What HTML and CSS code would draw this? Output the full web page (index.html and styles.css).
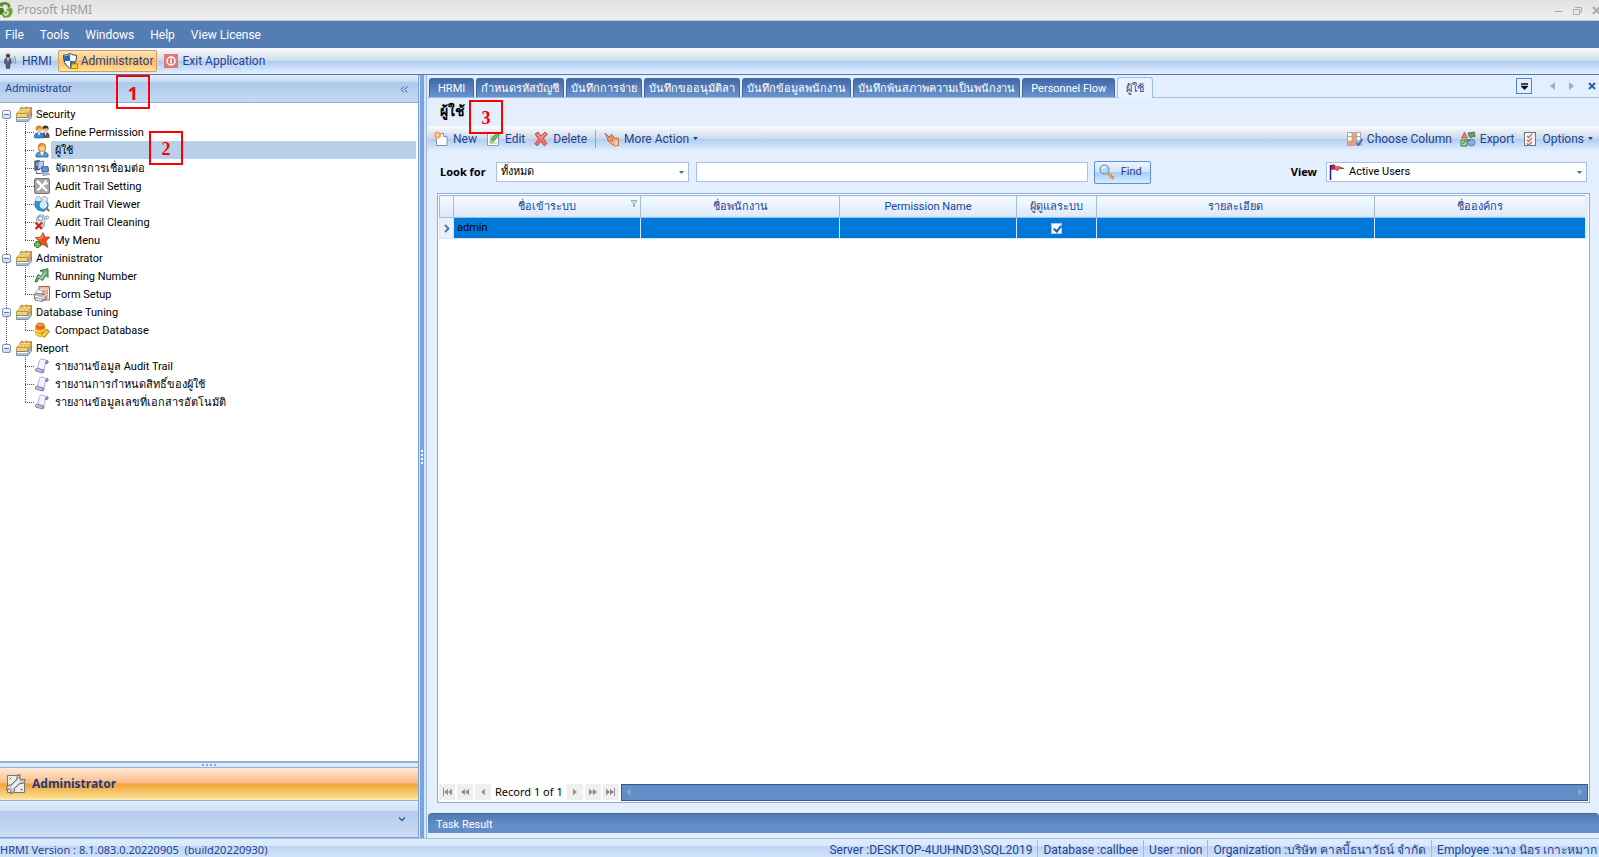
FILE: index.html
```html
<!DOCTYPE html>
<html lang="th">
<head>
<meta charset="utf-8">
<title>Prosoft HRMI</title>
<link rel="stylesheet" href="styles.css">
</head>
<body>
<svg class="defs" aria-hidden="true">
  <defs>
    <symbol id="i-folder" viewBox="0 0 16 16">
      <path d="M0.5 8.5 4 4.500V2.500L6 1 8 2.500 10 .8 12 2 15.500 1.500V9L12 13.500H1.500Z" fill="#e4b04a" stroke="#a97716" stroke-width=".8"/>
      <path d="M1 7 5 2.500H15.300L11.500 7Z" fill="#fff0b5" stroke="#b78524" stroke-width=".6"/>
      <path d="M7 3 4 7M11 3 8 7M4 4.800H13" stroke="#c99b42" stroke-width=".7"/>
      <path d="M.5 7.500H11.500V11.500H.5Z" fill="#f7d36d" stroke="#b98828" stroke-width=".7"/>
      <path d="M.5 11.500H11.500L15.500 7V11L12 15.500H.5Z" fill="#aebfd0" stroke="#687c91" stroke-width=".8"/><path d="M1 12.500H11.500" stroke="#fff"/>
    </symbol>
    <symbol id="i-users" viewBox="0 0 16 16">
      <circle cx="11.500" cy="5" r="2.700" fill="#e9b885"/><path d="M8.500 5Q8 1.500 11.500 1.500T14.500 6L13 4Z" fill="#333"/><path d="M8 14V10Q8.500 8 11.500 8T15.500 11V14Z" fill="#565b62"/><path d="m10.500 8 1 4 1-4Z" fill="#fff"/>
      <circle cx="5" cy="5" r="3" fill="#f5bc73"/><path d="M1.500 6Q1 1.500 5 1.500T8.500 6Q7 5.500 6 4 4 5.500 1.500 6Z" fill="#d88a20"/><path d="M.5 14V11Q1 8.500 5 8.500T9.500 11V14Z" fill="#3787d8" stroke="#174d8c" stroke-width=".5"/><path d="m3.500 8.500 1.500 3 1.500-3Z" fill="#fff"/>
    </symbol>
    <symbol id="i-user" viewBox="0 0 16 16">
      <path d="M2 15V12.500Q3 9.500 8 9.500T14 12.500V15Z" fill="#4c9de1" stroke="#1c5ba4" stroke-width=".8"/>
      <path d="M4 3Q8-1.500 12 3V8L10 10.500H6L4 8Z" fill="#dd8c28"/><circle cx="8" cy="6" r="2.900" fill="#f9d09a"/><path d="M4.800 5.500Q6 1 11.200 5.500 8.500 5 7.500 3.500 7 5 4.800 5.500Z" fill="#d17d1d"/><path d="m6 9.800 2 4.200 2-4.200Z" fill="#fff"/>
    </symbol>
    <symbol id="i-connect" viewBox="0 0 16 16">
      <path d="M.8 1 5.500 .5V9.500L.8 10.500Z" fill="#57678c" stroke="#293654" stroke-width=".7"/><path d="M2 3H5M2 5H5" stroke="#c5d2ea"/>
      <path d="M4 2 9.500 1V8L4 9Z" fill="#b9cdf0" stroke="#5d7196" stroke-width=".8"/>
      <path d="m7.500 7 6.500-.5.500 5-6.500.7Z" fill="#5b97e8" stroke="#46566f" stroke-width=".9"/><path d="M2.500 11.500V13.500H7.500" stroke="#555e6b" fill="none"/><path d="m8.500 13.500 6-.5 1 1.500-6.500 1Z" fill="#d9dee6" stroke="#697686" stroke-width=".7"/>
    </symbol>
    <symbol id="i-tools" viewBox="0 0 16 16">
      <rect x=".5" y=".5" width="15" height="15" rx="1.500" fill="#a8a8a8" stroke="#747474"/><path d="M3.500 12.500 11 5M4.500 4.500 13 13" stroke="#fff" stroke-width="2.200"/><path d="m2 3.500 2-1.500 3 3-2 2Z" fill="#fff"/><path d="M9.500 4.500 11.500 2 13 2.500 11.800 4 13 5l1-1Q14.500 7 11 6.800Z" fill="#fff"/>
    </symbol>
    <symbol id="i-viewer" viewBox="0 0 16 16">
      <circle cx="4.500" cy="3.500" r="3" fill="#e1e6eb" stroke="#8492a2" stroke-dasharray="1.500 .8"/><circle cx="10.500" cy="3.500" r="3" fill="#e1e6eb" stroke="#8492a2" stroke-dasharray="1.500 .8"/><path d="M1 5.500 14 6.500V11L10 15.500 4 14 1 10.500Z" fill="#299ad9" stroke="#1769a5" stroke-width=".7"/><circle cx="9.500" cy="9" r="3.300" fill="#c6edff" stroke="#e8f8ff"/><path d="m12 11.500 3.200 3.700" stroke="#8b7043" stroke-width="2"/>
    </symbol>
    <symbol id="i-clean" viewBox="0 0 16 16">
      <path d="M3 3 5 .8 9.500 1 11 5 10 13 4 13 2.500 8Z" fill="#dbe8f2" stroke="#8095aa" stroke-width=".8"/><circle cx="6.500" cy="4.500" r="2.300" fill="#fff" stroke="#73889e"/><path d="M12 5V2Q14.500 1.500 14.500 3.500T12 5" fill="none" stroke="#8095aa"/><path d="M9 8V12.500" stroke="#9aaec0"/><path d="M1.500 8.500 8 15M8 8.500 1.500 15" stroke="#d8200d" stroke-width="2.300"/>
    </symbol>
    <symbol id="i-star" viewBox="0 0 16 16">
      <path d="m9 .5 2 4.500 5 0-4 4.200 2 6.300-5-3-5 2 1.500-5L1 5.500 6.500 5Z" fill="#ee4b25" stroke="#ad2c10" stroke-width=".6"/><path d="m8.500 2.500-.5 3.500-4 .5" fill="none" stroke="#ffa47a"/><path d="M0 12.500H7M3.500 9V16" stroke="#2d7525" stroke-width="3.500"/><path d="M.8 12.500H6.200M3.500 9.800V15.500" stroke="#7dcc58" stroke-width="1.800"/>
    </symbol>
    <symbol id="i-running" viewBox="0 0 16 16">
      <path d="M1 13.500 4 6.500l3 2L9.500 4.800 6 2.500 14 .8V9.500L12 7.300 8.500 12.500 5 10 3 14Z" fill="#6fb675" stroke="#2d6841" stroke-width=".9"/><path d="m4.500 8.500 2.800 2 4-6" stroke="#d6f0d7" fill="none"/>
    </symbol>
    <symbol id="i-form" viewBox="0 0 16 16">
      <path d="M5 .5H15.500V14H5Z" fill="#fff4e8" stroke="#a55d42"/><path d="M5 2H15M7 5H14M7 7H14M10 3V13M13 3V13" stroke="#dc8c69"/><path d="M1 7 4 3.500 9 5 7 9Z" fill="#fff" stroke="#888" stroke-width=".7"/><path d="m0 9 3-2 9 2v4l-4 2.500L1 14Z" fill="#b4b8bd" stroke="#666" stroke-width=".8"/><path d="m1 10 7 2 4-3M2 13l5 1.500" fill="none" stroke="#fff"/>
    </symbol>
    <symbol id="i-database" viewBox="0 0 16 16">
      <path d="M1 3.500H11.500V13Q9 16 4 14.500L1 12Z" fill="#f4a712"/><path d="M2.500 3V6.500Q6 8.500 10 6.500V3Z" fill="#e0661a"/><ellipse cx="6.300" cy="3" rx="3.900" ry="2" fill="#f39446" stroke="#c55a0b" stroke-width=".7"/><path d="M1 8Q6 11.500 12 7.500M1 11Q6 14 9 12.500" fill="none" stroke="#ffe27a" stroke-width="1.400"/><path d="m7 12.500 6-5.500 2.500 2.500-5 6Z" fill="#e2bd28" stroke="#9a7811" stroke-width=".8"/><path d="m8.500 14 4-4" stroke="#fff6a6"/>
    </symbol>
    <symbol id="i-scroll" viewBox="0 0 16 16">
      <path d="M5.500 2.500Q6 .5 8 1L13.500 2.500Q15.500 4 13 5.500L11.500 5 9.800 12.500 3.500 10.500Z" fill="#f2f3fc" stroke="#9da1bd" stroke-width=".8"/><path d="M3 10 10 12.200Q10.500 14.500 8.500 15L1.500 13Q.5 11 3 10Z" fill="#b9bddc" stroke="#70769b" stroke-width=".8"/><path d="M13.500 2.500Q11 3 11.500 5.500 14 6.500 14 3.500ZM10 12Q7.500 13 8.500 15" fill="#8d92b3" stroke="#777e9f" stroke-width=".8"/>
    </symbol>
    <symbol id="i-logo" viewBox="0 0 14 16">
      <path d="M0 1Q8-2 11 4.500L7.500 6.500Q9 2.500 4 2.500L2 5-1 3.500Z" fill="#5a8f2e"/><path d="M11 5.500Q15 9 10 15L4 16 1 12H4L5 14Q9 13 9 10L6 7.500Z" fill="#6da73a"/><path d="M0 6Q3 5 4 8T0 13Z" fill="#477b26"/><path d="m4 9 4 1-1.500 2.500L4.500 12Z" fill="#8dbb53"/>
    </symbol>
    <symbol id="i-person" viewBox="0 0 16 16">
      <circle cx="5" cy="2.700" r="2.200" fill="#584941"/><path d="M1.500 6Q4 4 8 5.500L9 10 7.500 11 7 16H3L2.500 11 .8 10Z" fill="#4d5c78"/><path d="m4 5 1 5 1-5Z" fill="#e7edf6"/><path d="m5 6-.5 3 .5 1 .5-1Z" fill="#c13f39"/><path d="M9.500 4.500Q11 7 10 10M11.500 3Q13.500 7 12 11" fill="none" stroke="#8d96a4"/>
    </symbol>
    <symbol id="i-shield" viewBox="0 0 16 16">
      <path d="M8 .5Q11 2.500 14.500 2.200 15 11 8 15.500 1 11 1.500 2.200 5 2.500 8 .5Z" fill="#fff" stroke="#30435f"/><path d="M8 1.500V8H2Q1.800 5 2.300 3Q5.500 3 8 1.500ZM8 8H14Q12.500 12 8 14.500Z" fill="#2d67bd"/><rect x="9.500" y="11" width="6" height="4.500" fill="#ffd02a" stroke="#a87a00" stroke-width=".8"/><path d="M10.800 11V9.500Q12.500 7.500 14.200 9.500V11" fill="none" stroke="#bd9107"/>
    </symbol>
    <symbol id="i-power" viewBox="0 0 16 16"><rect x="1" y="1" width="14" height="14" fill="#df7774"/><circle cx="8" cy="8" r="4" fill="none" stroke="#fff" stroke-width="1.500"/><path d="M8 5.500V10.500" stroke="#fff" stroke-width="1.600"/></symbol>
    <symbol id="i-new" viewBox="0 0 14 16"><path d="M2.500 2.500H9.500L13 5.500V14.500H2.500Z" fill="#fff" stroke="#8795ad"/><path d="M9.500 2.500V5.500H13" fill="#dfe8f4" stroke="#8795ad"/><circle cx="3.500" cy="4" r="3.500" fill="#f6a177"/><circle cx="3.500" cy="4" r="1.500" fill="#ffe489"/></symbol>
    <symbol id="i-edit" viewBox="0 0 14 16"><path d="M1.500 2.500H12.500V14.500H1.500Z" fill="#fff" stroke="#8b9cb7"/><path d="M3.500 5H8M3.500 7H7M3.500 12H11" stroke="#a3b5cf"/><path d="m4 12 1-4 6-6.500L13.500 4 7 11Z" fill="#75b956" stroke="#438435" stroke-width=".7"/><path d="m4 12 1-3 2 2Z" fill="#ffd0a2"/></symbol>
    <symbol id="i-delete" viewBox="0 0 14 16"><path d="m1 3 3-2 3 4 4-4 2.500 2-4 4.500 3.500 5-2.500 2.500L7 10.500 3 15 .8 12.500 4.500 8Z" fill="#ed6f66" stroke="#bb4743" stroke-width=".8"/><path d="m3 3 4 4 4-4" stroke="#ffb3a8" fill="none"/></symbol>
    <symbol id="i-more" viewBox="0 0 16 16"><path d="m1 2 5 5-2 2Z" fill="#f0a58c" stroke="#8b5b55" stroke-width=".8"/><path d="m3.500 9 1.500-3 2.500-2.500 2 2.500 1.500 1.500 3.500-.5V14.500L10.500 15 5 11Z" fill="#f5a97b" stroke="#a9674e" stroke-width=".8"/><path d="m6 4 3 5M8 3.500 11 8M5 9l4 1" fill="none" stroke="#b4694c"/><path d="m10 11 4-2v5l-3 .5Z" fill="#ffc79c"/></symbol>
    <symbol id="i-columns" viewBox="0 0 16 16"><path d="M.5 1.500H13.500V14.500H.5Z" fill="#fff" stroke="#9aa6b5"/><path d="M5 1H9.500V15H5ZM1 10H5V14H1Z" fill="#f2a36a"/><path d="M5 1V15M9.500 1V15M0 5.500H14M0 10H14" stroke="#b7a497"/><path d="M9 9H15V15H9Z" fill="#9ab4dc"/><path d="m9.500 12 2 2 4-6" fill="none" stroke="#5761ad" stroke-width="1.700"/></symbol>
    <symbol id="i-export" viewBox="0 0 16 16"><path d="m4.500 1 3 6H1.500Z" fill="#ee7b66" stroke="#bc5545" stroke-width=".8"/><path d="m8 2 6.500-1L15 6l-2-1-2 2-2-2Z" fill="#5fa566" stroke="#377444" stroke-width=".8"/><path d="M1 9H7V15H1Z" fill="#a6d39c" stroke="#3c7b3c"/><circle cx="11.500" cy="11.500" r="3.500" fill="#8fa9dd" stroke="#546ea0" stroke-width=".8"/><path d="m2.500 13 3-3M7 8.500l3 1" stroke="#31622f"/></symbol>
    <symbol id="i-options" viewBox="0 0 12 16"><rect x=".5" y="1.500" width="11" height="13" fill="#f6f6f8" stroke="#6a7380"/><path d="m3 5 1.500 1.500L8 3M3 9l1.500 1.500L8 7M3 12.500 4.500 14 8 11" fill="none" stroke="#d5655e" stroke-width="1.300"/></symbol>
    <symbol id="i-find" viewBox="0 0 16 16"><circle cx="5.500" cy="5.500" r="4.500" fill="#a9dff2" stroke="#6c8190"/><path d="M3 5Q4 2 7 3" stroke="#fff" stroke-width="1.500" fill="none"/><path d="m9 9 5.500 5.500" stroke="#d47848" stroke-width="2.600"/><path d="m9 9 5 5" stroke="#ffc392"/></symbol>
    <symbol id="i-flag" viewBox="0 0 16 16"><path d="M2.500 1V5.500L5 5 9 6.500 8 5 15 4.500 9 2.500 7 3 5 .8Z" fill="#ef8171" stroke="#8b2540" stroke-width=".8"/><path d="M2.500 1H6V5H2.500Z" fill="#cf2121"/><path d="M1.500 1V16" stroke="#2312a6" stroke-width="1.500"/></symbol>
    <symbol id="i-wrench" viewBox="0 0 20 20"><path d="M1.500 1.500H12L18.500 9V18.500H1.500Z" fill="#ececec" stroke="#747474"/><path d="M12 1 14 .8 13.500 4 15.500 6 19 5.500Q19.500 10 14 9.500L8.500 14.500Q9 19 4.500 19.500L5 16.500 3.500 15 .8 15.500Q0 10.500 5 11L11 5Q10.500 2 12 1Z" fill="#d2d2d2" stroke="#606060"/><path d="m6 13.500 7-6.500" stroke="#fff" stroke-width="1.500"/><circle cx="15.500" cy="15.500" r=".8" fill="#444"/><circle cx="4.500" cy="4.500" r=".8" fill="#777"/></symbol>
    <symbol id="i-caret" viewBox="0 0 5 3"><path d="M0 0H5L2.500 3Z" fill="currentColor"/></symbol>
    <symbol id="i-left" viewBox="0 0 5 8"><path d="M5 0V8L0 4Z" fill="currentColor"/></symbol>
    <symbol id="i-right" viewBox="0 0 5 8"><path d="M0 0V8L5 4Z" fill="currentColor"/></symbol>
  </defs>
</svg>

<header class="titlebar">
  <svg class="logo"><use href="#i-logo"/></svg>
  <span class="app-name">Prosoft HRMI</span>
  <div class="window-buttons">
    <button type="button" aria-label="Minimize"><svg width="9" height="9" viewBox="0 0 9 9"><path d="M1 5.500H8" stroke="#aaa"/></svg></button>
    <button type="button" aria-label="Restore"><svg width="9" height="9" viewBox="0 0 9 9"><path d="M2 1.500H8.500V6H7M.5 3.500H6.500V8.500H.5Z" fill="none" stroke="#aaa"/></svg></button>
    <button type="button" aria-label="Close"><svg width="9" height="9" viewBox="0 0 9 9"><path d="m1 1 7 7M8 1 1 8" stroke="#aaa" stroke-width="2"/></svg></button>
  </div>
</header>

<nav class="menubar">
  <button type="button">File</button><button type="button">Tools</button><button type="button">Windows</button><button type="button">Help</button><button type="button">View License</button>
</nav>

<div class="main-tools">
  <button type="button"><svg class="icon"><use href="#i-person"/></svg>HRMI</button>
  <button type="button" class="pressed"><svg class="icon"><use href="#i-shield"/></svg>Administrator</button>
  <button type="button"><svg class="icon"><use href="#i-power"/></svg>Exit Application</button>
</div>

<div class="workspace">
  <aside class="sidebar">
    <div class="side-head"><h2>Administrator</h2><button type="button" aria-label="Collapse"><svg width="8" height="7" viewBox="0 0 8 7"><path d="M4 .5 1 3.500 4 6.500M7.500 .5 4.500 3.500 7.500 6.500" fill="none" stroke="#2f62b0"/></svg></button></div>
    <ul class="tree">
      <li class="group"><button type="button" class="node"><i class="toggle"></i><svg class="icon"><use href="#i-folder"/></svg><span>Security</span></button>
        <ul>
          <li><button type="button" class="node"><svg class="icon"><use href="#i-users"/></svg><span>Define Permission</span></button></li>
          <li><button type="button" class="node selected"><svg class="icon"><use href="#i-user"/></svg><span>ผู้ใช้</span></button></li>
          <li><button type="button" class="node"><svg class="icon"><use href="#i-connect"/></svg><span>จัดการการเชื่อมต่อ</span></button></li>
          <li><button type="button" class="node"><svg class="icon"><use href="#i-tools"/></svg><span>Audit Trail Setting</span></button></li>
          <li><button type="button" class="node"><svg class="icon"><use href="#i-viewer"/></svg><span>Audit Trail Viewer</span></button></li>
          <li><button type="button" class="node"><svg class="icon"><use href="#i-clean"/></svg><span>Audit Trail Cleaning</span></button></li>
          <li><button type="button" class="node"><svg class="icon"><use href="#i-star"/></svg><span>My Menu</span></button></li>
        </ul>
      </li>
      <li class="group"><button type="button" class="node"><i class="toggle"></i><svg class="icon"><use href="#i-folder"/></svg><span>Administrator</span></button>
        <ul>
          <li><button type="button" class="node"><svg class="icon"><use href="#i-running"/></svg><span>Running Number</span></button></li>
          <li><button type="button" class="node"><svg class="icon"><use href="#i-form"/></svg><span>Form Setup</span></button></li>
        </ul>
      </li>
      <li class="group"><button type="button" class="node"><i class="toggle"></i><svg class="icon"><use href="#i-folder"/></svg><span>Database Tuning</span></button>
        <ul>
          <li><button type="button" class="node"><svg class="icon"><use href="#i-database"/></svg><span>Compact Database</span></button></li>
        </ul>
      </li>
      <li class="group"><button type="button" class="node"><i class="toggle"></i><svg class="icon"><use href="#i-folder"/></svg><span>Report</span></button>
        <ul>
          <li><button type="button" class="node"><svg class="icon"><use href="#i-scroll"/></svg><span>รายงานข้อมูล Audit Trail</span></button></li>
          <li><button type="button" class="node"><svg class="icon"><use href="#i-scroll"/></svg><span>รายงานการกำหนดสิทธิ์ของผู้ใช้</span></button></li>
          <li><button type="button" class="node"><svg class="icon"><use href="#i-scroll"/></svg><span>รายงานข้อมูลเลขที่เอกสารอัตโนมัติ</span></button></li>
        </ul>
      </li>
    </ul>
    <div class="side-grip"><i></i><i></i><i></i><i></i></div>
    <button type="button" class="side-current"><svg><use href="#i-wrench"/></svg>Administrator</button>
    <div class="side-foot"><button type="button" aria-label="Configure"><svg width="8" height="5" viewBox="0 0 8 5"><path d="m1 .5 3 3 3-3" fill="none" stroke="#2f62b0" stroke-width="1.500"/></svg></button></div>
  </aside>
  <div class="splitter"><i></i><i></i><i></i><i></i></div>

  <main class="content">
    <div class="tabs">
      <button type="button" class="wide">HRMI</button>
      <button type="button">กำหนดรหัสบัญชี</button>
      <button type="button">บันทึกการจ่าย</button>
      <button type="button">บันทึกขออนุมัติลา</button>
      <button type="button">บันทึกข้อมูลพนักงาน</button>
      <button type="button">บันทึกพ้นสภาพความเป็นพนักงาน</button>
      <button type="button" class="wide">Personnel Flow</button>
      <button type="button" class="wide active">ผู้ใช้</button>
      <div class="tab-tools">
        <button type="button" class="tab-list" aria-label="Tab list"><svg width="7" height="7" viewBox="0 0 7 7"><path d="M0 1H7M1 3.500H6L3.500 6Z" fill="#111" stroke="#111" stroke-width="1.500"/></svg></button>
        <button type="button" aria-label="Previous"><svg class="arrow"><use href="#i-left"/></svg></button>
        <button type="button" aria-label="Next"><svg class="arrow"><use href="#i-right"/></svg></button>
        <button type="button" aria-label="Close tab"><svg width="8" height="8" viewBox="0 0 8 8"><path d="m1 1 6 6M7 1 1 7" stroke="#2f62ac" stroke-width="2"/></svg></button>
      </div>
    </div>
    <h1>ผู้ใช้</h1>
    <div class="actions">
      <button type="button"><svg class="icon"><use href="#i-new"/></svg>New</button>
      <button type="button"><svg class="icon"><use href="#i-edit"/></svg>Edit</button>
      <button type="button"><svg class="icon"><use href="#i-delete"/></svg>Delete</button>
      <i class="sep"></i>
      <button type="button"><svg class="icon"><use href="#i-more"/></svg>More Action<svg class="caret"><use href="#i-caret"/></svg></button>
      <span class="grow"></span>
      <button type="button"><svg class="icon"><use href="#i-columns"/></svg>Choose Column</button>
      <button type="button"><svg class="icon"><use href="#i-export"/></svg>Export</button>
      <button type="button"><svg class="icon"><use href="#i-options"/></svg>Options<svg class="caret"><use href="#i-caret"/></svg></button>
    </div>
    <form class="search">
      <label for="field">Look for</label>
      <div class="picker field"><select id="field"><option>ทั้งหมด</option></select><svg class="caret"><use href="#i-caret"/></svg></div>
      <input type="text" class="query" aria-label="Search text">
      <button type="button" class="find"><svg class="icon"><use href="#i-find"/></svg>Find</button>
      <label for="view" class="view-label">View</label>
      <div class="picker view"><svg class="icon"><use href="#i-flag"/></svg><select id="view"><option>Active Users</option></select><svg class="caret"><use href="#i-caret"/></svg></div>
    </form>
    <section class="grid">
      <table>
        <colgroup><col class="c-mark"><col class="c-login"><col class="c-name"><col class="c-perm"><col class="c-admin"><col class="c-desc"><col></colgroup>
        <thead><tr><th></th><th>ชื่อเข้าระบบ<svg class="filter" width="6" height="7" viewBox="0 0 6 7"><path d="M0 .5H6L3.500 3.500V6.500H2.500V3.500Z" fill="#d6e5f7" stroke="#8aa9d3"/></svg></th><th>ชื่อพนักงาน</th><th>Permission Name</th><th>ผู้ดูแลระบบ</th><th>รายละเอียด</th><th>ชื่อองค์กร</th></tr></thead>
        <tbody><tr><td class="mark"><svg width="6" height="9" viewBox="0 0 6 9"><path d="m1 1 3.500 3.500L1 8" fill="none" stroke="#5278ae" stroke-width="2"/></svg></td><td>admin</td><td></td><td></td><td class="check"><input type="checkbox" checked aria-label="ผู้ดูแลระบบ"></td><td></td><td></td></tr></tbody>
      </table>
      <div class="pager">
        <button type="button" aria-label="First"><i></i><svg class="arrow"><use href="#i-left"/></svg><svg class="arrow"><use href="#i-left"/></svg></button>
        <button type="button" aria-label="Page back"><svg class="arrow"><use href="#i-left"/></svg><svg class="arrow"><use href="#i-left"/></svg></button>
        <button type="button" aria-label="Back"><svg class="arrow"><use href="#i-left"/></svg></button>
        <span>Record 1 of 1</span>
        <button type="button" aria-label="Forward"><svg class="arrow"><use href="#i-right"/></svg></button>
        <button type="button" aria-label="Page forward"><svg class="arrow"><use href="#i-right"/></svg><svg class="arrow"><use href="#i-right"/></svg></button>
        <button type="button" aria-label="Last"><svg class="arrow"><use href="#i-right"/></svg><svg class="arrow"><use href="#i-right"/></svg><i></i></button>
        <div class="scroll"><svg class="arrow"><use href="#i-left"/></svg><svg class="arrow"><use href="#i-right"/></svg></div>
      </div>
    </section>
    <button type="button" class="task">Task Result</button>
  </main>
</div>

<footer class="status">
  <span class="version">HRMI Version : 8.1.083.0.20220905&nbsp; (build20220930)</span>
  <span>Server :DESKTOP-4UUHND3\SQL2019</span><span>Database :callbee</span><span>User :nion</span><span>Organization :บริษัท คาลบี้ธนาวัธน์ จำกัด</span><span>Employee :นาง นิอร เกาะหมาก</span>
</footer>

<b class="callout one">1</b>
<b class="callout two">2</b>
<b class="callout three">3</b>
</body>
</html>
```
FILE: styles.css
```css
* { box-sizing: border-box; }
body {
  margin: 0;
  height: 100vh;
  display: flex;
  flex-direction: column;
  position: relative;
  overflow: hidden;
  background: #e3eeff;
  color: #000;
  font: 11px/16px Roboto, "Noto Sans", sans-serif;
}
button, input, select { font: inherit; color: inherit; }
button { border: 0; padding: 0; margin: 0; background: none; display: inline-flex; align-items: center; white-space: nowrap; }
svg { display: block; flex: none; }
i { display: block; flex: none; }
.defs { position: absolute; width: 0; height: 0; }
.icon { width: 16px; height: 16px; }
.caret { width: 5px; height: 3px; }
.arrow { width: 5px; height: 8px; }

.titlebar { display: flex; align-items: center; height: 21px; flex: none; background: linear-gradient(#e2e2e2, #efefef); border-bottom: 1px solid #c5c9ce; color: #9b9b9b; font: 12px/16px "Noto Sans", sans-serif; }
.logo { width: 14px; height: 16px; margin-right: 3px; }
.app-name { flex: 1; }
.window-buttons { display: flex; gap: 10px; overflow: hidden; margin-right: -2px; }

.menubar, .main-tools, .actions { font: 12px/16px Roboto, "Noto Sans", sans-serif; }
.menubar { display: flex; align-items: center; flex: none; height: 27px; padding: 0 5px; gap: 16px; background: #547db3; color: #fff; }

.main-tools, .actions { color: #1e4394; background: linear-gradient(#fbfcfe 0, #cddaea 50%, #adcbf0 50%, #e3effe 100%); }
.main-tools { display: flex; align-items: center; flex: none; height: 27px; padding: 0 2px 1px 0; gap: 3px; border-bottom: 1px solid #4e7ab5; }
.main-tools button { height: 22px; padding: 0 3px; gap: 3px; }
.main-tools .pressed { border: 1px solid #d3a15a; border-radius: 2px; background: linear-gradient(#fde3b8 0, #fdc87c 45%, #fdb959 50%, #ffe39a 100%); }

.workspace { flex: 1; min-height: 0; display: flex; }
.sidebar { width: 419px; flex: none; display: flex; flex-direction: column; border-right: 1px solid #7aa0d8; }
.side-head { height: 28px; flex: none; display: flex; align-items: center; justify-content: space-between; padding: 1px 10px 0 5px; background: linear-gradient(#e1edfb 0, #c9dcf4 24%, #adc9ec 28%, #c5d9f3 100%); border-bottom: 1px solid #8faedb; }
.side-head h2 { margin: 0; font: inherit; color: #1e4394; }
.tree, .tree ul { list-style: none; margin: 0; padding: 0; }
.tree { flex: 1; min-height: 0; padding: 2px 2px 0 1px; background: #fff; }
.node { display: flex; height: 18px; width: 100%; text-align: left; }
.node span { display: block; height: 18px; line-height: 20px; padding: 0 4px; }
.group { background: repeating-linear-gradient(#555 0 1px, transparent 1px 2px) 5px 0 / 1px 100% no-repeat; }
.group:first-child { background-position: 5px 9px; }
.group:last-child { background-size: 1px 9px; }
.toggle { width: 9px; height: 9px; border: 1px solid #7b94c2; border-radius: 2px; margin-left: 1px; background: linear-gradient(#5b76ab, #5b76ab) center / 5px 1px no-repeat, linear-gradient(#fff, #c9d5ea); }
.toggle + .icon { margin-left: 5px; }
.group li { padding-left: 24px; background: repeating-linear-gradient(#555 0 1px, transparent 1px 2px) 24px 0 / 1px 100% no-repeat; }
.group li:last-child { background-size: 1px 10px; }
.group li .node::before { content: ""; flex: none; width: 9px; height: 1px; background: repeating-linear-gradient(90deg, #555 0 1px, transparent 1px 2px); }
.group li .node span { margin-left: 1px; }
.node.selected span { flex: 1; background: #b9d0ea; }
.side-grip { display: flex; justify-content: center; align-items: center; gap: 2px; height: 7px; flex: none; background: #dfebfb; border-top: 2px solid #8fb2df; border-bottom: 1px solid #8fb2df; }
.side-grip i { width: 2px; height: 2px; background: #8aabdb; }
.side-current { height: 32px; padding: 0 6px; gap: 6px; color: #1e3c7b; font: bold 12px/16px "Noto Sans", sans-serif; background: linear-gradient(#fee9da 0, #fbbd83 46%, #f2a136 50%, #fbe08f 94%, #fdf0bd 100%); }
.side-current svg { width: 20px; height: 20px; }
.side-foot { height: 38px; flex: none; display: flex; align-items: center; justify-content: flex-end; padding-right: 12px; border-top: 1px solid #8fb2df; border-bottom: 1px solid #7aa0d8; background: linear-gradient(#e3eefc 0, #cfe0f6 28%, #b4cbea 28%, #ccdcf4 100%); }

.splitter { width: 7px; flex: none; display: flex; flex-direction: column; align-items: center; justify-content: center; gap: 2px; background: #7ba2da; border-left: 1px solid #d5e5fb; border-right: 2px solid #d5e5fb; }
.splitter i { width: 2px; height: 2px; background: #fff; }

.content { flex: 1; min-width: 0; display: flex; flex-direction: column; border-left: 1px solid #9dbbe4; }
.tabs { display: flex; align-items: flex-end; gap: 2px; height: 23px; flex: none; padding-left: 2px; border-bottom: 1px solid #9ebce4; }
.tabs > button { height: 19px; padding: 0 4px; border: 1px solid #43689f; border-bottom: 0; border-radius: 3px 3px 0 0; color: #fff; background: linear-gradient(#4169ab, #6b93cc); line-height: 17px; }
.tabs > .wide { padding: 0 8px; }
.tabs > .active { height: 21px; margin-bottom: -1px; color: #1e4394; background: #e9f2ff; border-color: #9ebce4; }
.tab-tools { margin-left: auto; height: 22px; display: flex; align-items: center; gap: 14px; padding: 0 3px 0 0; color: #93b0d3; }
.tab-list { width: 16px; height: 16px; justify-content: center; margin-right: 4px; border: 1px solid #4c86cf; background: #e3effe; }
h1 { margin: 0; flex: none; height: 28px; padding: 3px 13px; font-size: 14px; line-height: 20px; font-weight: bold; }
.actions { height: 25px; flex: none; display: flex; align-items: center; padding: 0 6px; gap: 8px; }
.actions button { gap: 4px; }
.sep { width: 1px; height: 18px; background: #87a9d8; }
.grow { flex: 1; }
.search { height: 42px; flex: none; display: flex; align-items: center; padding: 0 12px 0 13px; }
.search label { font: bold 11px/16px "Noto Sans", sans-serif; }
.picker { position: relative; display: flex; align-items: center; height: 20px; border: 1px solid #a9c0e2; background: #fff; }
.picker select { flex: 1; min-width: 0; height: 18px; padding: 0 4px; border: 0; background: none; appearance: none; line-height: 16px; }
.picker .caret { margin-right: 4px; color: #3f6cae; }
.picker.field { width: 193px; margin: 0 7px 0 10px; }
.query { flex: 1; min-width: 80px; max-width: 392px; height: 20px; border: 1px solid #a9c0e2; background: #fff; }
.find { height: 23px; padding: 0 8px 0 4px; gap: 6px; margin-left: 6px; border: 1px solid #5b91d6; border-radius: 2px; color: #1e4394; background: linear-gradient(#eef6fe 0, #cfe2f7 48%, #aacdf2 50%, #d4ebff 100%); }
.view-label { margin-left: auto; }
.picker.view { width: 261px; margin-left: 9px; padding-left: 2px; }

.grid { flex: 1; min-height: 0; margin: 0 9px 0 10px; display: flex; flex-direction: column; border: 1px solid #8facd6; background: #fff; padding: 1px; }
table { table-layout: fixed; width: 100%; border-collapse: collapse; border-right: 3px solid #e3eeff; }
.c-mark { width: 14px; } .c-login { width: 187px; } .c-name { width: 199px; } .c-perm { width: 177px; } .c-admin { width: 80px; } .c-desc { width: 278px; }
th { position: relative; height: 22px; padding: 0; font-weight: normal; color: #1e4394; border: 1px solid #9dbbe4; background: linear-gradient(#f7fbff, #d9e8fa); line-height: 16px; }
.filter { position: absolute; top: 4px; right: 3px; }
td { height: 21px; padding: 0 3px; border: 1px solid #d6e6fa; background: #0078d9; }
td.mark { padding: 0 4px; background: #e8f2fe; }
td input { appearance: none; display: block; width: 11px; height: 11px; margin: 0 auto; border: 1px solid #a9c4e6; background: #f5f9ff; position: relative; }
td input:checked::after { content: ""; position: absolute; left: 3px; top: 0; width: 3px; height: 6px; border: solid #2c5ba5; border-width: 0 2px 2px 0; transform: rotate(40deg); }
.pager { margin-top: auto; display: flex; align-items: center; height: 18px; gap: 2px; color: #8f8f8f; }
.pager button { width: 16px; height: 16px; justify-content: center; background: #efefef; }
.pager button i { width: 1px; height: 8px; background: #8f8f8f; }
.pager .arrow { width: 4px; height: 8px; }
.pager span { color: #000; padding: 0 2px; font: 11px/16px "Noto Sans", sans-serif; }
.scroll { flex: 1; height: 17px; display: flex; align-items: center; justify-content: space-between; padding: 0 4px; color: #82a6d8; border: 1px solid #35588f; background: #628dc6; }
.pager .scroll .arrow { width: 5px; }
.task { height: 20px; flex: none; margin: 10px 0 5px 1px; padding: 3px 0 0 8px; border-radius: 4px 4px 0 0; border-top: 1px solid #426b9e; color: #fff; background: linear-gradient(#5279ae, #628dc8 60%); }

.status { height: 19px; flex: none; display: flex; align-items: flex-end; overflow: hidden; border-top: 1px solid #9dbfe8; background: linear-gradient(#e0ecfb 0, #d7e7fa 40%, #bdd6f5 42%, #cfe2f8 100%); color: #1e4394; font: 12px/20px Roboto, "Noto Sans", sans-serif; }
.status span { padding: 0 5px; border-right: 1px solid #9dbbe4; height: 17px; white-space: nowrap; }
.status .version { padding-left: 0; margin-right: auto; border: 0; font: 11px/20px "Noto Sans", sans-serif; }
.status span:last-child { border: 0; padding-right: 2px; }

.callout { position: absolute; width: 34px; height: 34px; border: 2px solid #f00; color: #f00; text-align: center; font: bold 18px/32px "Liberation Serif", serif; }
.one { left: 116px; top: 75px; font-family: "Noto Sans", sans-serif; }
.two { left: 149px; top: 131px; }
.three { left: 469px; top: 100px; }
```
